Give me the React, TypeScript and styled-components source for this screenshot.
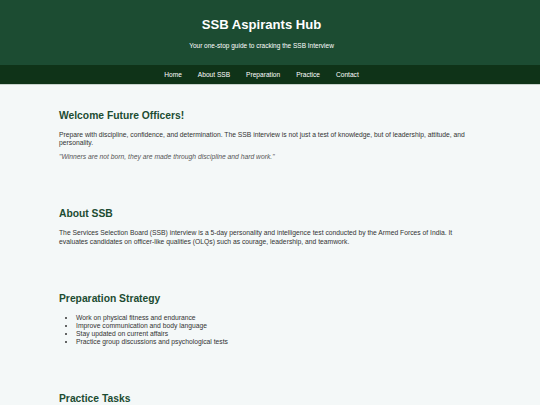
import React from "react";
import styled, { createGlobalStyle } from "styled-components";

const Global = createGlobalStyle`
  html, body { margin: 0; padding: 0; }
  body {
    background: #f4f8f8;
    font-family: "Liberation Sans", Arial, sans-serif;
    color: #333333;
  }
`;

const Header = styled.header`
  background: #1c4c32;
  color: #ffffff;
  text-align: center;
  padding: 16px 17px 15.5px 0;
`;

const Title = styled.h1`
  margin: 0;
  font-size: 13.1px;
  line-height: 18px;
  font-weight: 700;
`;

const Tagline = styled.p`
  margin: 6.5px 0 0;
  font-size: 6.5px;
  line-height: 9px;
`;

const Nav = styled.nav`
  background: #0f3318;
  height: 19px;
  padding-right: 17px;
  display: flex;
  align-items: center;
  justify-content: center;
  gap: 16px;
  border-bottom: 1px solid #c9d3cd;
`;

const NavLink = styled.a`
  color: #ffffff;
  text-decoration: none;
  font-size: 6.6px;
  line-height: 9px;
`;

const Main = styled.main`
  padding: 23.5px 70px 0 59px;
  display: flex;
  flex-direction: column;
  gap: 46px;
`;

const Section = styled.section`
  display: flex;
  flex-direction: column;
  gap: 5px;
`;

const Heading = styled.h2`
  margin: 0 0 3px;
  font-size: 10.3px;
  line-height: 14px;
  font-weight: 700;
  color: #1c4c32;
`;

const Text = styled.p<{ $italic?: boolean }>`
  margin: 0;
  font-size: 6.75px;
  line-height: 8.5px;
  color: ${(p) => (p.$italic ? "#555555" : "#333333")};
  font-style: ${(p) => (p.$italic ? "italic" : "normal")};
`;

const List = styled.ul`
  margin: 0;
  padding-left: 17px;
  font-size: 6.75px;
  line-height: 8px;
  color: #333333;
`;

const navItems = ["Home", "About SSB", "Preparation", "Practice", "Contact"];

export default function App() {
  return (
    <>
      <Global />
      <Header>
        <Title>SSB Aspirants Hub</Title>
        <Tagline>Your one-stop guide to cracking the SSB Interview</Tagline>
      </Header>
      <Nav>
        {navItems.map((n) => (
          <NavLink key={n} href="#">
            {n}
          </NavLink>
        ))}
      </Nav>
      <Main>
        <Section>
          <Heading>Welcome Future Officers!</Heading>
          <Text>
            Prepare with discipline, confidence, and determination. The SSB interview is not just a test of
            knowledge, but of leadership, attitude, and personality.
          </Text>
          <Text $italic>"Winners are not born, they are made through discipline and hard work."</Text>
        </Section>
        <Section>
          <Heading>About SSB</Heading>
          <Text>
            The Services Selection Board (SSB) interview is a 5-day personality and intelligence test conducted
            by the Armed Forces of India. It evaluates candidates on officer-like qualities (OLQs) such as
            courage, leadership, and teamwork.
          </Text>
        </Section>
        <Section>
          <Heading>Preparation Strategy</Heading>
          <List>
            <li>Work on physical fitness and endurance</li>
            <li>Improve communication and body language</li>
            <li>Stay updated on current affairs</li>
            <li>Practice group discussions and psychological tests</li>
          </List>
        </Section>
        <Section>
          <Heading>Practice Tasks</Heading>
        </Section>
      </Main>
    </>
  );
}
